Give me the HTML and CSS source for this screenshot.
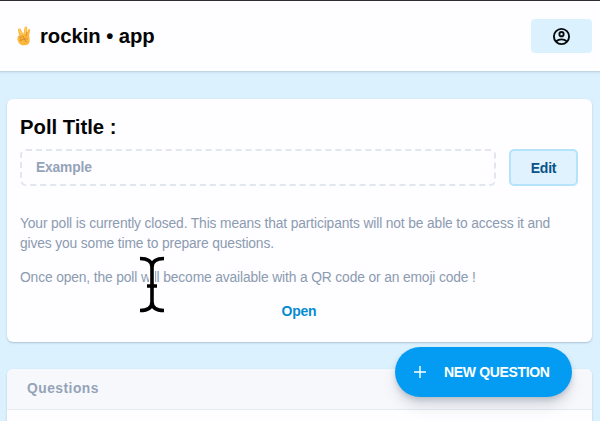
FILE: index.html
```html
<!DOCTYPE html>
<html lang="en">
<head>
<meta charset="utf-8">
<title>rockin • app</title>
<link rel="stylesheet" href="styles.css">
</head>
<body>
<header class="topbar">
  <div class="brand">
    <svg class="hand" viewBox="0 0 16 20" aria-hidden="true">
      <path d="M3.6 11 1.9 4Q1.9 2.4 3.2 2.4T4.9 3.6L7.3 8.5 8.6 1.5Q9 .3 10.2.5T11.3 2L10.8 7 12.2 3.4Q13.6 2.4 14.2 3.8L13.1 9.5Q14.6 15.5 12.3 18.2Q9 20 5.5 18.9Q1.8 17.3 1.4 12.7Q1.3 10 3 10Z" fill="#fbb73c"/>
      <path d="M2.7 10.5Q3.8 9.7 4.5 11.2L5.2 14M5.2 11Q6.5 9.2 7.7 10.7L8 13M4.2 14.6Q7 12.5 11.3 12.9M8.4 12.8Q8.4 15.2 10.8 16M10.8 6.5 10 9.8" fill="none" stroke="#cf7d28" stroke-width=".7" stroke-linecap="round"/>
      <path d="M3.3 3.8 5.2 8.6M10 2 8.9 8" fill="none" stroke="#ffd66d" stroke-width=".9" stroke-linecap="round"/>
    </svg>
    <span>rockin • app</span>
  </div>
  <button class="account" aria-label="Account">
    <svg viewBox="0 0 24 24" aria-hidden="true"><g fill="none" stroke="currentColor" stroke-width="2.4"><circle cx="12" cy="12" r="9.6"/><circle cx="12" cy="9" r="2.7"/><path d="M5 18.3Q8 15.6 12 15.6T19 18.3"/></g></svg>
  </button>
</header>
<main class="content">
  <section class="card poll">
    <h1>Poll Title :</h1>
    <div class="title-row">
      <div class="title-field">Example</div>
      <button class="edit">Edit</button>
    </div>
    <p class="status">Your poll is currently closed. This means that participants will not be able to access it and<br>gives you some time to prepare questions.</p>
    <p class="hint">Once open, the poll will become available with a QR code or an emoji code !</p>
    <button class="open">Open</button>
  </section>
  <section class="card questions">
    <h2>Questions</h2>
  </section>
</main>
<button class="fab">
  <svg viewBox="0 0 12 12" aria-hidden="true"><path d="M6 0V12M0 6H12" stroke="currentColor" stroke-width="1.4"/></svg>
  <span>NEW QUESTION</span>
</button>
<svg class="cursor" viewBox="0 0 28 58" aria-hidden="true">
  <g fill="none"><path d="M2 3.5Q14 3.5 14 12V47Q14 55.5 2 55.5M26 3.5Q14 3.5 14 12M14 47Q14 55.5 26 55.5M9 31H19" stroke="#fefdff" stroke-width="6"/><path d="M2 3.5Q14 3.5 14 12V47Q14 55.5 2 55.5M26 3.5Q14 3.5 14 12M14 47Q14 55.5 26 55.5M9 31H19" stroke="#000" stroke-width="3.6"/></g>
</svg>
</body>
</html>
```
FILE: styles.css
```css
* { box-sizing: border-box; }
html { height: 421px; overflow: hidden; }
body {
  margin: 0;
  height: 421px;
  overflow: hidden;
  background: #dbf1fe;
  color: #050505;
  font-family: "Liberation Sans", Arial, sans-serif;
  display: flex;
  flex-direction: column;
}
button { padding: 0; border: 0; font: inherit; }
h1, h2, p { margin: 0; }
.topbar {
  flex: none;
  height: 72px;
  border-top: 1px solid #302e35;
  border-bottom: 1px solid #c3d5e1;
  background: #fefdff;
  display: flex;
  align-items: center;
  justify-content: space-between;
  padding: 0 8px 0 16px;
  box-shadow: 0 1px 2px #b7d0df80;
}
.brand {
  display: flex;
  align-items: center;
  gap: 8px;
  font-size: 20.3px;
  letter-spacing: -.05px;
  font-weight: 700;
  white-space: nowrap;
}
.hand { width: 16px; height: 20px; }
.account {
  width: 61px;
  height: 34px;
  border-radius: 4px;
  background: #dbf1fe;
  color: #080b0d;
  display: grid;
  place-items: center;
}
.account svg { width: 19px; height: 19px; }
.content {
  flex: 1;
  min-height: 0;
  padding: 27px 8px 0 7px;
  display: flex;
  flex-direction: column;
  gap: 27px;
}
.card {
  border-radius: 6px;
  background: #fefdff;
  box-shadow: 0 1px 2px #8ca7b9a0;
}
.poll {
  flex: none;
  height: 243px;
  padding: 17px 14px 0 13px;
  display: flex;
  flex-direction: column;
}
.poll h1 { font-size: 20.3px; line-height: 23px; }
.title-row { display: flex; gap: 13px; margin-top: 10px; height: 37px; }
.title-field {
  flex: 1;
  border: 2px dashed #e1e6ef;
  border-radius: 6px;
  padding-left: 14px;
  font-size: 13.8px;
  letter-spacing: -.15px;
  line-height: 33px;
  font-weight: 700;
  color: #94a3b8;
}
.edit {
  width: 69px;
  border: 2px solid #b5e3fb;
  border-radius: 5px;
  background: #dff2fe;
  color: #075489;
  font-size: 14px;
  letter-spacing: -.2px;
  font-weight: 700;
}
.status, .hint {
  font-size: 13.8px;
  letter-spacing: -.13px;
  line-height: 20px;
  color: #8b9bb0;
  white-space: nowrap;
}
.status { margin-top: 28px; }
.hint { margin-top: 14px; }
.open {
  align-self: center;
  margin-top: 13px;
  background: none;
  color: #078cd0;
  font-size: 14px;
  letter-spacing: -.25px;
  line-height: 20px;
  font-weight: 700;
}
.questions { flex: 1; min-height: 0; overflow: hidden; border-radius: 6px 6px 0 0; }
.questions h2 {
  height: 41px;
  padding-left: 20px;
  border-bottom: 1px solid #e7ebf1;
  background: #f7f8fc;
  color: #94a3b8;
  font-size: 13.8px;
  line-height: 39px;
  letter-spacing: .5px;
}
.fab {
  position: absolute;
  left: 395px;
  top: 347px;
  width: 177px;
  height: 50px;
  padding-left: 19px;
  border-radius: 25px;
  background: #049cf3;
  color: #fff;
  display: flex;
  align-items: center;
  gap: 18px;
  font-size: 14px;
  letter-spacing: -.35px;
  font-weight: 700;
  white-space: nowrap;
  box-shadow: 0 10px 14px -2px #53607038, 0 3px 5px #53607038;
}
.fab svg { width: 12px; height: 12px; }
.cursor { position: absolute; left: 138px; top: 255px; width: 28px; height: 58px; }
```
